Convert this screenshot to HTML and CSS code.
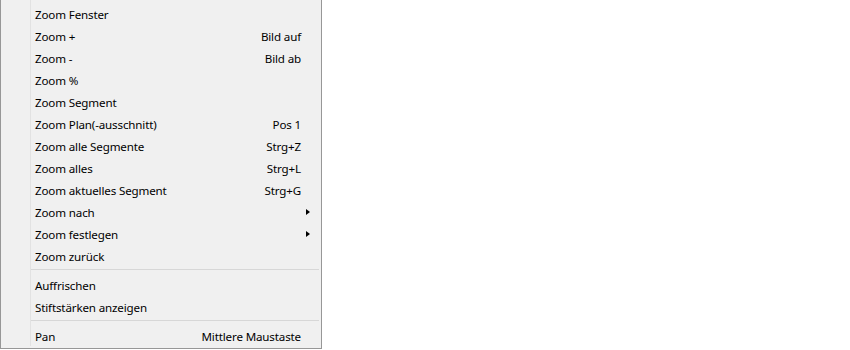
FILE: index.html
```html
<!DOCTYPE html>
<html lang="de">

<head>
    <meta charset="UTF-8">
    <title>Zoom</title>
    <link rel="stylesheet" href="styles.css">
</head>

<body>
    <div class="menu">
        <div class="menu-item"><span>Zoom Fenster</span></div>
        <div class="menu-item"><span>Zoom +</span><span class="shortcut">Bild auf</span></div>
        <div class="menu-item"><span>Zoom -</span><span class="shortcut">Bild ab</span></div>
        <div class="menu-item"><span>Zoom %</span></div>
        <div class="menu-item"><span>Zoom Segment</span></div>
        <div class="menu-item"><span>Zoom Plan(-ausschnitt)</span><span class="shortcut">Pos 1</span></div>
        <div class="menu-item"><span>Zoom alle Segmente</span><span class="shortcut">Strg+Z</span></div>
        <div class="menu-item"><span>Zoom alles</span><span class="shortcut">Strg+L</span></div>
        <div class="menu-item"><span>Zoom aktuelles Segment</span><span class="shortcut">Strg+G</span></div>
        <div class="menu-item"><span>Zoom nach</span><span class="shortcut"></span><span class="submenu-arrow"></span></div>
        <div class="menu-item"><span>Zoom festlegen</span><span class="shortcut"></span><span class="submenu-arrow"></span></div>
        <div class="menu-item"><span>Zoom zurück</span></div>
        <div class="separator"></div>
        <div class="menu-item"><span>Auffrischen</span></div>
        <div class="menu-item"><span>Stiftstärken anzeigen</span></div>
        <div class="separator"></div>
        <div class="menu-item"><span>Pan</span><span class="shortcut">Mittlere Maustaste</span></div>
    </div>
</body>

</html>
```

FILE: styles.css
```css
* {
    margin: 0;
    padding: 0;
    box-sizing: border-box;
}

body {
    background-color: #ffffff;
    font-family: 'Noto Sans', 'Open Sans', sans-serif;
    font-size: 11.6px;
    letter-spacing: -0.15px;
    color: #000000;
}

.menu {
    width: 322px;
    height: 349px;
    padding: 3px 0 1px 0;
    display: flex;
    flex-direction: column;
    background-color: #f0f0f0;
    background-image: linear-gradient(to right, #e2e2e2, #e2e2e2);
    background-size: 1px calc(100% - 2px);
    background-position: 29px 0;
    background-repeat: no-repeat;
    border: 1px solid #979797;
    border-top: none;
}

.menu-item {
    height: 22px;
    padding-left: 34px;
    display: grid;
    grid-template-columns: 1fr auto 20px;
    align-items: center;
    white-space: nowrap;
}

.shortcut {
    text-align: right;
}

.submenu-arrow {
    width: 0;
    height: 0;
    margin-left: 5px;
    border-top: 3.5px solid transparent;
    border-bottom: 3.5px solid transparent;
    border-left: 4px solid #000000;
}

.separator {
    height: 7px;
    margin: 0 2px 0 30px;
    padding-top: 2px;
}

.separator::before {
    content: '';
    display: block;
    height: 1px;
    background-color: #d7d7d7;
}
```
